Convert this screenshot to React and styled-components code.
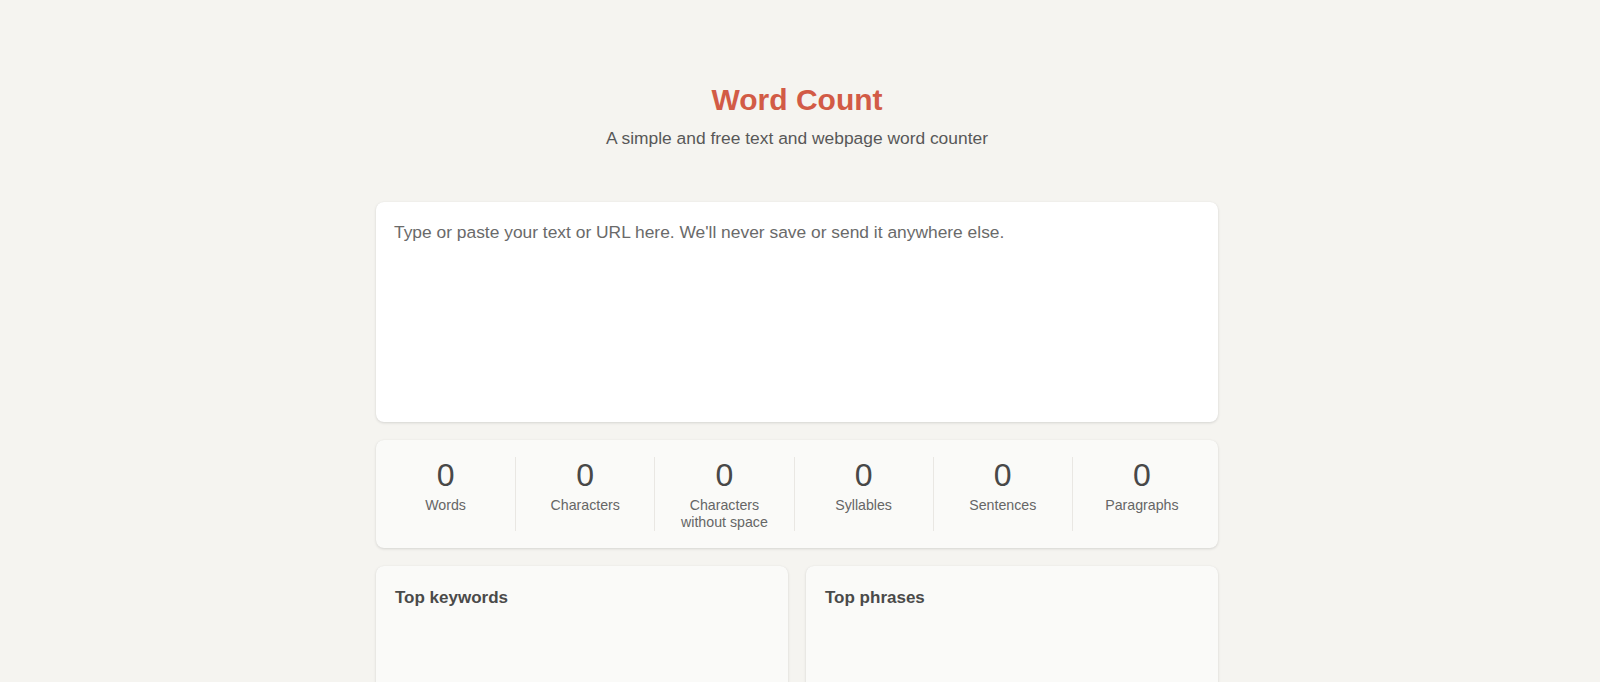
import React from 'react'
import styled, { createGlobalStyle } from 'styled-components'

const GlobalStyle = createGlobalStyle`
    html, body {
        margin: 0;
        padding: 0;
        background: #f5f4f0;
    }
    body {
        padding-right: 6px;
        font-family: "Liberation Sans", Arial, sans-serif;
        color: #555;
    }
`

const Page = styled.div`
    width: 842px;
    margin: 0 auto;
    padding-top: 81px;
`

const Header = styled.header`
    text-align: center;
    margin-bottom: 54px;
`

const Title = styled.h1`
    margin: 0;
    font-size: 30px;
    line-height: 38px;
    font-weight: bold;
    color: #d25b46;
`

const Subtitle = styled.p`
    margin: 9px 0 0;
    font-size: 17.4px;
    line-height: 20px;
    color: #585858;
`

const Card = styled.div`
    background: ${p => p.white ? '#fff' : '#fafaf8'};
    border-radius: 8px;
    box-shadow: 0 1px 3px rgba(0, 0, 0, 0.13), 0 0 1px rgba(0, 0, 0, 0.05);
`

const Editor = styled.textarea`
    display: block;
    box-sizing: border-box;
    width: 100%;
    height: 220px;
    padding: 19px 18px 17px;
    border: none;
    outline: none;
    resize: none;
    background: transparent;
    font-family: "Liberation Sans", Arial, sans-serif;
    font-size: 17.4px;
    line-height: 22px;
    color: #444;
    caret-color: #d25b46;

    &::placeholder {
        color: #6a6a6a;
    }
`

const Stats = styled(Card)`
    margin-top: 18px;
    padding: 17px 7px 17px 0;
    display: grid;
    grid-template-columns: repeat(6, 1fr);
`

const Stat = styled.div`
    text-align: center;
    & + & {
        border-left: 1px solid #e9e7e3;
    }
`

const Number = styled.div`
    font-size: 32px;
    line-height: 36px;
    color: #484848;
`

const Label = styled.div`
    margin-top: 4px;
    font-size: 14.2px;
    line-height: 17px;
    color: #666;
`

const Lists = styled.div`
    margin-top: 18px;
    display: grid;
    grid-template-columns: 1fr 1fr;
    gap: 18px;
`

const ListCard = styled(Card)`
    min-height: 200px;
    padding: 21px 19px 18px;
`

const ListTitle = styled.h2`
    margin: 0;
    font-size: 17px;
    line-height: 22px;
    font-weight: bold;
    color: #4a4a4a;
`

const stats = [
    { label: 'Words' },
    { label: 'Characters' },
    { label: 'Characters\nwithout space' },
    { label: 'Syllables' },
    { label: 'Sentences' },
    { label: 'Paragraphs' },
]

export default function App() {
    return (
        <>
            <GlobalStyle />
            <Page>
                <Header>
                    <Title>Word Count</Title>
                    <Subtitle>A simple and free text and webpage word counter</Subtitle>
                </Header>
                <Card white>
                    <Editor autoFocus placeholder="Type or paste your text or URL here. We'll never save or send it anywhere else." />
                </Card>
                <Stats>
                    {stats.map(s =>
                        <Stat key={s.label}>
                            <Number>0</Number>
                            <Label>{s.label.split('\n').map(l => <div key={l}>{l}</div>)}</Label>
                        </Stat>
                    )}
                </Stats>
                <Lists>
                    <ListCard>
                        <ListTitle>Top keywords</ListTitle>
                    </ListCard>
                    <ListCard>
                        <ListTitle>Top phrases</ListTitle>
                    </ListCard>
                </Lists>
            </Page>
        </>
    )
}
